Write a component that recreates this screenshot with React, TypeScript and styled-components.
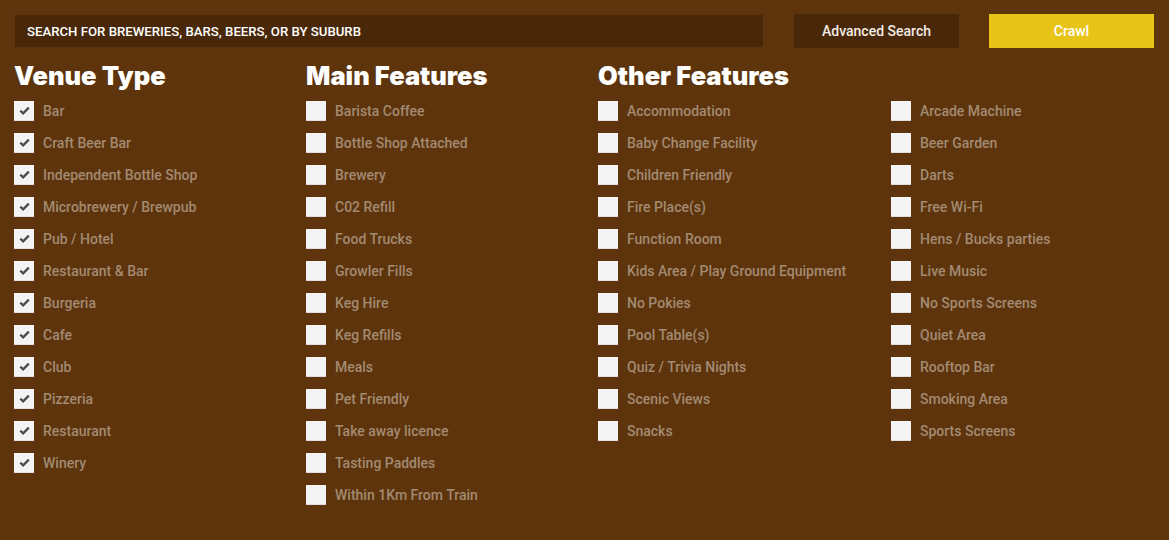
import React from 'react';
import styled, { createGlobalStyle } from 'styled-components';

const COLORS = {
  BG: '#5d340b',
  DARK: '#482809',
  YELLOW: '#e8c318',
  LABEL: '#a38a72',
  WHITE: '#ffffff',
  BOX: '#f4f4f4'
};

const GlobalStyle = createGlobalStyle`
  html, body {
    margin: 0;
    padding: 0;
    background: ${COLORS.BG};
  }
  body {
    font-family: Roboto, 'Liberation Sans', sans-serif;
  }
`;

const Page = styled.div`
  width: 1169px;
  height: 540px;
  box-sizing: border-box;
  padding: 14px 15px 0 14px;
  background: ${COLORS.BG};
  overflow: hidden;
`;

const TopBar = styled.div`
  display: flex;
  align-items: center;
  gap: 30px;
  margin-left: 1px;
`;

const SearchInput = styled.input`
  width: 748px;
  height: 32px;
  box-sizing: border-box;
  margin-right: 1px;
  padding: 0 12px;
  border: none;
  outline: none;
  background: ${COLORS.DARK};
  color: ${COLORS.WHITE};
  font-family: Roboto, 'Liberation Sans', sans-serif;
  font-size: 13.2px;
  font-weight: 500;

  &::placeholder {
    color: ${COLORS.WHITE};
    text-transform: uppercase;
    opacity: 1;
  }
`;

const ActionButton = styled.button<{ $primary?: boolean }>`
  width: 165px;
  height: 34px;
  border: none;
  background: ${({ $primary }) => ($primary ? COLORS.YELLOW : COLORS.DARK)};
  color: ${({ $primary }) => ($primary ? COLORS.WHITE : '#f2ebe3')};
  font-family: Roboto, 'Liberation Sans', sans-serif;
  font-size: 14px;
  font-weight: 500;
  cursor: pointer;
`;

const Columns = styled.div`
  display: grid;
  grid-template-columns: 292px 292px 585px;
  margin-top: 13px;
`;

const Section = styled.div``;

const Heading = styled.h2`
  margin: 0 0 10px 0;
  height: 30px;
  line-height: 30px;
  color: ${COLORS.WHITE};
  font-family: Inter, 'Liberation Sans', sans-serif;
  font-size: 25.5px;
  font-weight: 900;
`;

const SubColumns = styled.div`
  display: grid;
  grid-template-columns: 293px 1fr;
`;

const List = styled.div`
  display: flex;
  flex-direction: column;
  gap: 12px;
`;

const Row = styled.label`
  display: flex;
  align-items: center;
  height: 20px;
  gap: 9px;
  cursor: pointer;
`;

const Box = styled.span`
  width: 20px;
  height: 20px;
  box-sizing: border-box;
  background: ${COLORS.BOX};
  border-bottom: 1px solid #dedede;
  display: flex;
  align-items: center;
  justify-content: center;
  flex-shrink: 0;
`;

const Label = styled.span`
  color: ${COLORS.LABEL};
  font-size: 14px;
  font-weight: 500;
  line-height: 20px;
  white-space: nowrap;
`;

const Check = () => (
  <svg width="11" height="9" viewBox="0 0 11 9">
    <path d="M1.3 4.6 L4.2 7.4 L9.8 1.6" fill="none" stroke="#4e4e4e" strokeWidth="2.3" />
  </svg>
);

const Item = ({ label, checked }: { label: string; checked?: boolean }) => (
  <Row>
    <Box>{checked && <Check />}</Box>
    <Label>{label}</Label>
  </Row>
);

const venueTypes = [
  'Bar',
  'Craft Beer Bar',
  'Independent Bottle Shop',
  'Microbrewery / Brewpub',
  'Pub / Hotel',
  'Restaurant & Bar',
  'Burgeria',
  'Cafe',
  'Club',
  'Pizzeria',
  'Restaurant',
  'Winery'
];

const mainFeatures = [
  'Barista Coffee',
  'Bottle Shop Attached',
  'Brewery',
  'C02 Refill',
  'Food Trucks',
  'Growler Fills',
  'Keg Hire',
  'Keg Refills',
  'Meals',
  'Pet Friendly',
  'Take away licence',
  'Tasting Paddles',
  'Within 1Km From Train'
];

const otherA = [
  'Accommodation',
  'Baby Change Facility',
  'Children Friendly',
  'Fire Place(s)',
  'Function Room',
  'Kids Area / Play Ground Equipment',
  'No Pokies',
  'Pool Table(s)',
  'Quiz / Trivia Nights',
  'Scenic Views',
  'Snacks'
];

const otherB = [
  'Arcade Machine',
  'Beer Garden',
  'Darts',
  'Free Wi-Fi',
  'Hens / Bucks parties',
  'Live Music',
  'No Sports Screens',
  'Quiet Area',
  'Rooftop Bar',
  'Smoking Area',
  'Sports Screens'
];

const App = () => (
  <Page>
    <GlobalStyle />
    <TopBar>
      <SearchInput placeholder="Search for breweries, bars, beers, or by suburb" />
      <ActionButton>Advanced Search</ActionButton>
      <ActionButton $primary>Crawl</ActionButton>
    </TopBar>
    <Columns>
      <Section>
        <Heading>Venue Type</Heading>
        <List>
          {venueTypes.map((v) => (
            <Item key={v} label={v} checked />
          ))}
        </List>
      </Section>
      <Section>
        <Heading>Main Features</Heading>
        <List>
          {mainFeatures.map((v) => (
            <Item key={v} label={v} />
          ))}
        </List>
      </Section>
      <Section>
        <Heading>Other Features</Heading>
        <SubColumns>
          <List>
            {otherA.map((v) => (
              <Item key={v} label={v} />
            ))}
          </List>
          <List>
            {otherB.map((v) => (
              <Item key={v} label={v} />
            ))}
          </List>
        </SubColumns>
      </Section>
    </Columns>
  </Page>
);

export default App;
